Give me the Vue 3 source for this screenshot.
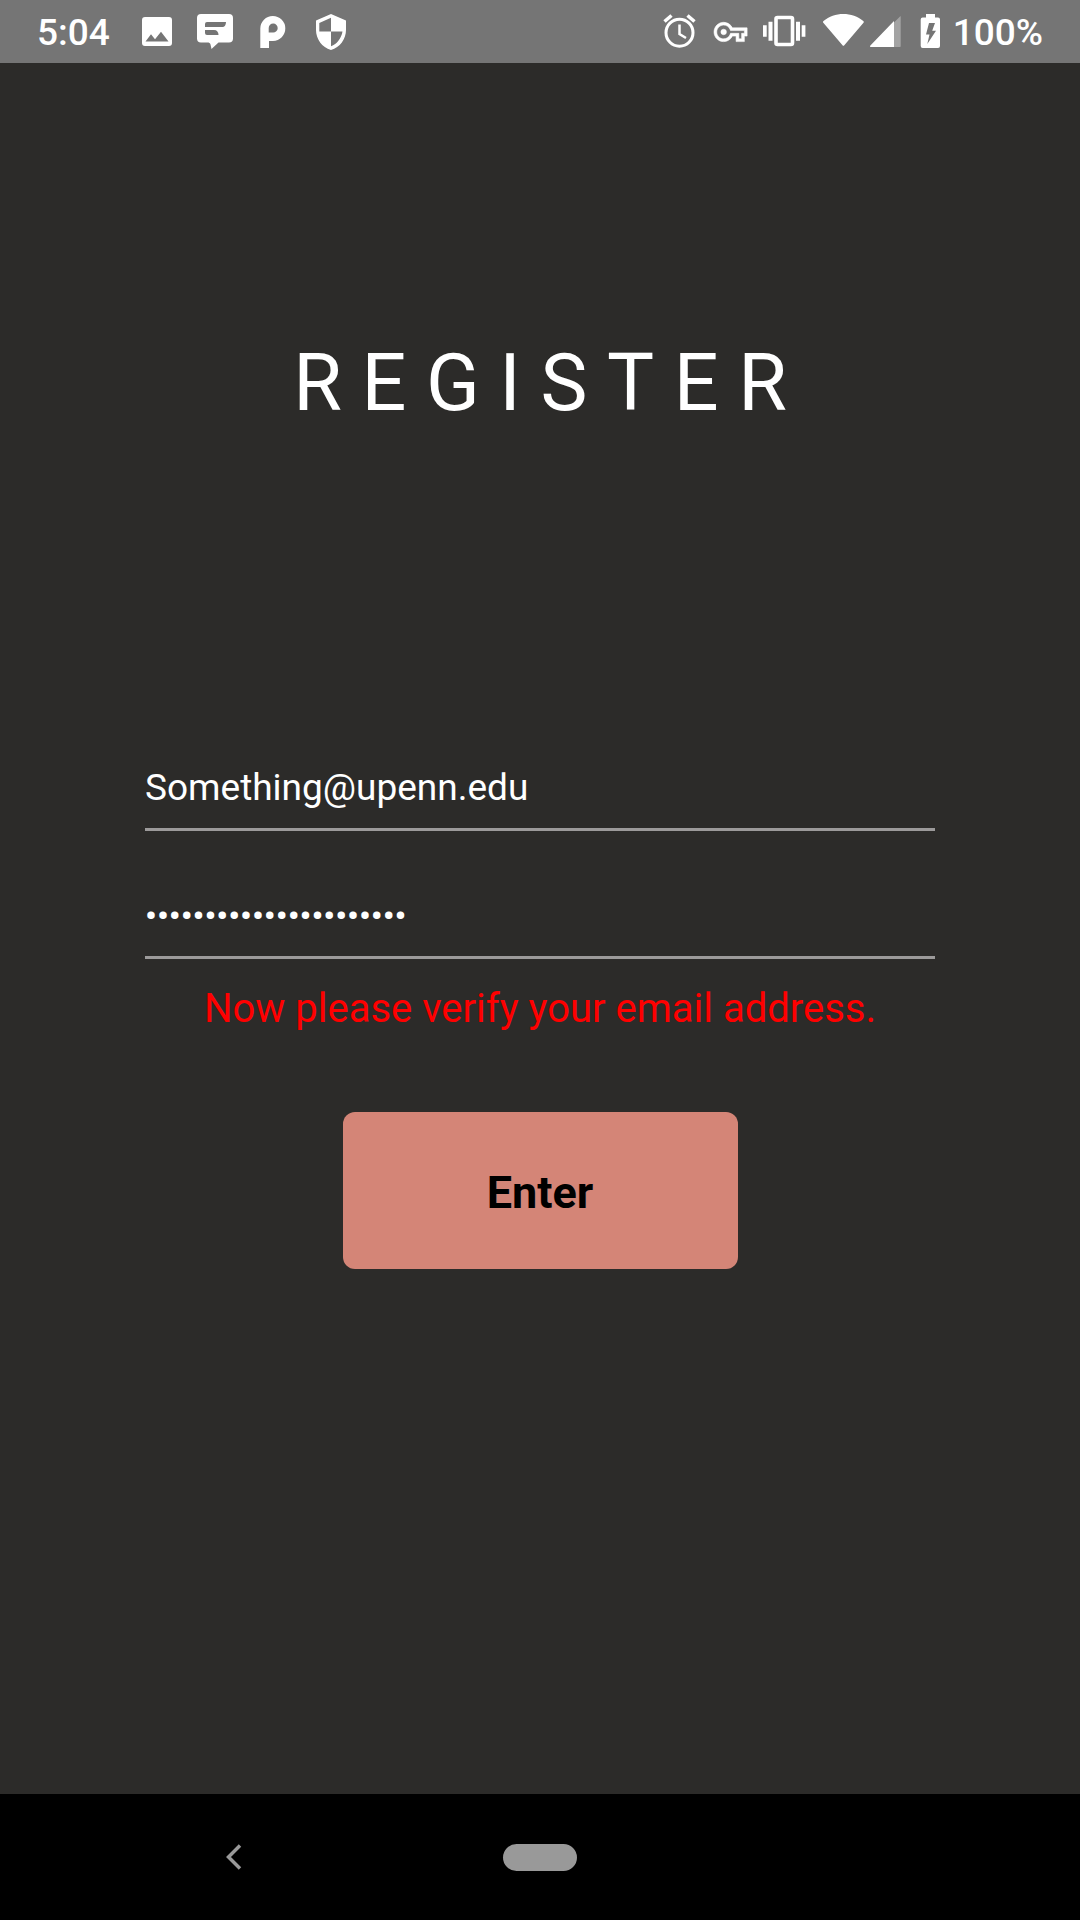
<script setup>
import { ref } from 'vue'

const email = ref('Something@upenn.edu')
const password = ref('correcthorsebatterysta')
const message = ref('Now please verify your email address.')
</script>

<template>
  <div class="screen">
    <header class="status">
      <span class="label">5:04</span>
      <div class="notifications">
        <svg width="46" height="47" viewBox="0 0 46 47" aria-hidden="true">
          <path fill="#fff" fill-rule="evenodd" d="M11 9h24a3 3 0 0 1 3 3v23a3 3 0 0 1-3 3H11a3 3 0 0 1-3-3V12a3 3 0 0 1 3-3zM11.500 33.500h23L27 23.700l-6 7.600-4-5z" />
        </svg>
        <svg width="46" height="47" viewBox="0 0 46 47" aria-hidden="true">
          <path fill="#fff" fill-rule="evenodd" d="M9 6h28a4 4 0 0 1 4 4v20.500a4 4 0 0 1-4 4H26.500L19.500 41l-1-4.500c-.4-1.400-1.500-2-3-2H9a4 4 0 0 1-4-4V10a4 4 0 0 1 4-4zM15 14a2 2 0 0 0-2 2v3h17.500c2 0 3.500-2 3.500-5zM13 22v3a2 2 0 0 0 2 2h11.500c0-3-1.500-5-4.500-5z" />
        </svg>
        <svg width="46" height="47" viewBox="0 0 46 47" aria-hidden="true">
          <path fill="#fff" fill-rule="evenodd" d="M10.300 40V20.500A12.500 12.500 0 1 1 23 33h-4v7zM18.700 24.500H23a4.500 4.500 0 1 0-4.300-4.500z" />
        </svg>
        <svg width="46" height="47" viewBox="0 0 46 47" aria-hidden="true">
          <path fill="#fff" fill-rule="evenodd" d="M23 6l15 6.500V22c0 9-6 17.500-15 20C14 39.500 8 31 8 22v-9.500zM23 9.800L11.300 15v8.500H23zM23 23.500v14.800c6-2.300 10.400-8 11.500-14.800z" />
        </svg>
      </div>
      <div class="system">
        <svg width="50" height="47" viewBox="0 0 50 47" fill="none" stroke="#fff" aria-hidden="true">
          <circle cx="24.500" cy="24.700" r="13.500" stroke-width="3" />
          <path d="M24.500 16.500v9.500l6.500 4" stroke-width="2.500" />
          <path d="M9.500 13.500l7-6M32.500 7.500l7 6" stroke-width="3.500" />
        </svg>
        <svg width="52" height="47" viewBox="0 0 52 47" aria-hidden="true">
          <g transform="translate(9 7.400) scale(1.380)" fill="#fff" stroke="#fff" stroke-width=".4">
            <path d="M22 19h-6v-4h-2.680c-1.140 2.420-3.600 4-6.320 4-3.860 0-7-3.140-7-7s3.140-7 7-7c2.720 0 5.170 1.580 6.320 4H24v6h-2v4zm-4-2h2v-4h2v-2H11.940l-.23-.67C11.010 8.340 9.110 7 7 7c-2.760 0-5 2.240-5 5s2.240 5 5 5c2.110 0 4.010-1.340 4.710-3.330l.23-.67H18v4z" />
            <circle cx="7" cy="12" r="2" />
          </g>
        </svg>
        <svg width="54" height="47" viewBox="0 0 54 47" aria-hidden="true">
          <rect x="19" y="9.500" width="16.500" height="27" rx="1.500" fill="none" stroke="#fff" stroke-width="3.600" />
          <path fill="#fff" d="M11.500 13.700h4v19h-4zM6 17.300h3.700v11.400H6zM39 13.700h4v19h-4zM44.700 17.300h3.700v11.400h-3.700z" />
        </svg>
        <svg width="55" height="47" viewBox="0 0 55 47" aria-hidden="true">
          <path fill="#fff" d="M31.500 37.300L12.300 14.800c-.5-.7-.4-1.300.2-1.800C18 8.500 25 6 32.300 6S47 8.500 52.300 13c.6.500.7 1.100.2 1.800L33.300 37.300c-.6.700-1.200.7-1.800 0z" />
        </svg>
        <svg width="44" height="47" viewBox="0 0 44 47" aria-hidden="true">
          <path fill="#a3a3a3" d="M28 14.500l6-6c.3-.3.700-.2.700.3V38c0 .6-.4 1-1 1H28z" />
          <path fill="#fff" d="M28 13v26H5c-1 0-1.300-.9-.6-1.600z" />
        </svg>
        <svg width="42" height="47" viewBox="0 0 42 47" aria-hidden="true">
          <path fill="#fff" fill-rule="evenodd" d="M16 6h9v3.500h3a2 2 0 0 1 2 2V38a2 2 0 0 1-2 2H12.700a2 2 0 0 1-2-2V11.500a2 2 0 0 1 2-2H16zM19 15l-3 11.500h3.500L17.300 36 26 22.700h-3.800L25 15z" />
        </svg>
        <span class="label battery">100%</span>
      </div>
    </header>

    <main class="content">
      <h1 class="title">R E G I S T E R</h1>
      <form class="form" @submit.prevent>
        <input v-model="email" class="field" type="email" aria-label="Email" />
        <input v-model="password" class="field secret" type="password" aria-label="Password" autocomplete="off" />
        <p class="message" role="status">{{ message }}</p>
        <button class="enter" type="submit">Enter</button>
      </form>
    </main>

    <nav class="navbar">
      <button class="back" type="button" aria-label="Back">
        <svg width="16" height="26" viewBox="0 0 16 26" fill="none" stroke="#999" stroke-width="3.500" aria-hidden="true">
          <path d="M14 1.500L2.500 13 14 24.500" />
        </svg>
      </button>
      <button class="home" type="button" aria-label="Home"></button>
    </nav>
  </div>
</template>

<style>
body {
  margin: 0;
  background: #2c2b29;
}
</style>

<style scoped>
.screen {
  display: flex;
  flex-direction: column;
  min-height: 100vh;
  background: #2c2b29;
  color: #fff;
  font-family: Roboto, "Liberation Sans", sans-serif;
}

.status {
  display: flex;
  align-items: center;
  height: 63px;
  padding: 0 37px;
  background: #757575;
  font-size: 37px;
  font-weight: 500;
  line-height: 44px;
}

.status svg {
  display: block;
  flex: none;
}

.label {
  padding-top: 3px;
}

.battery {
  padding-left: 1px;
}

.notifications {
  display: flex;
  gap: 12px;
  margin-left: 24px;
}

.system {
  display: flex;
  align-items: center;
  margin-left: auto;
}

.content {
  flex: 1;
  padding: 272px 145px 0;
}

.title {
  margin: 0;
  font-size: 79px;
  font-weight: 400;
  line-height: 96px;
  text-align: center;
  white-space: nowrap;
  font-kerning: none;
}

.form {
  display: flex;
  flex-direction: column;
  margin-top: 272px;
}

.field {
  box-sizing: border-box;
  width: 100%;
  height: 128px;
  padding: 62px 0 19px;
  border: 0;
  border-bottom: 3px solid #9c9a9a;
  border-radius: 0;
  outline: 0;
  background: transparent;
  color: #fff;
  font-family: inherit;
  font-size: 37px;
  line-height: 44px;
}

.secret {
  font-size: 34px;
  font-weight: 500;
}

.message {
  margin: 26px 0 79px;
  color: #f00;
  font-size: 40px;
  line-height: 48px;
  text-align: center;
}

.enter {
  align-self: center;
  width: 50%;
  height: 157px;
  padding: 4px 0 0;
  border: 0;
  border-radius: 12px;
  background: #d48577;
  color: #000;
  font-family: inherit;
  font-size: 45px;
  font-weight: 700;
}

.navbar {
  display: grid;
  grid-template-columns: 1fr auto 1fr;
  align-items: center;
  height: 126px;
  background: #000;
}

.back {
  justify-self: center;
  display: flex;
  margin-right: 36px;
  padding: 20px;
  border: 0;
  background: none;
}

.home {
  width: 74px;
  height: 27px;
  padding: 0;
  border: 0;
  border-radius: 14px;
  background: #999;
}
</style>
